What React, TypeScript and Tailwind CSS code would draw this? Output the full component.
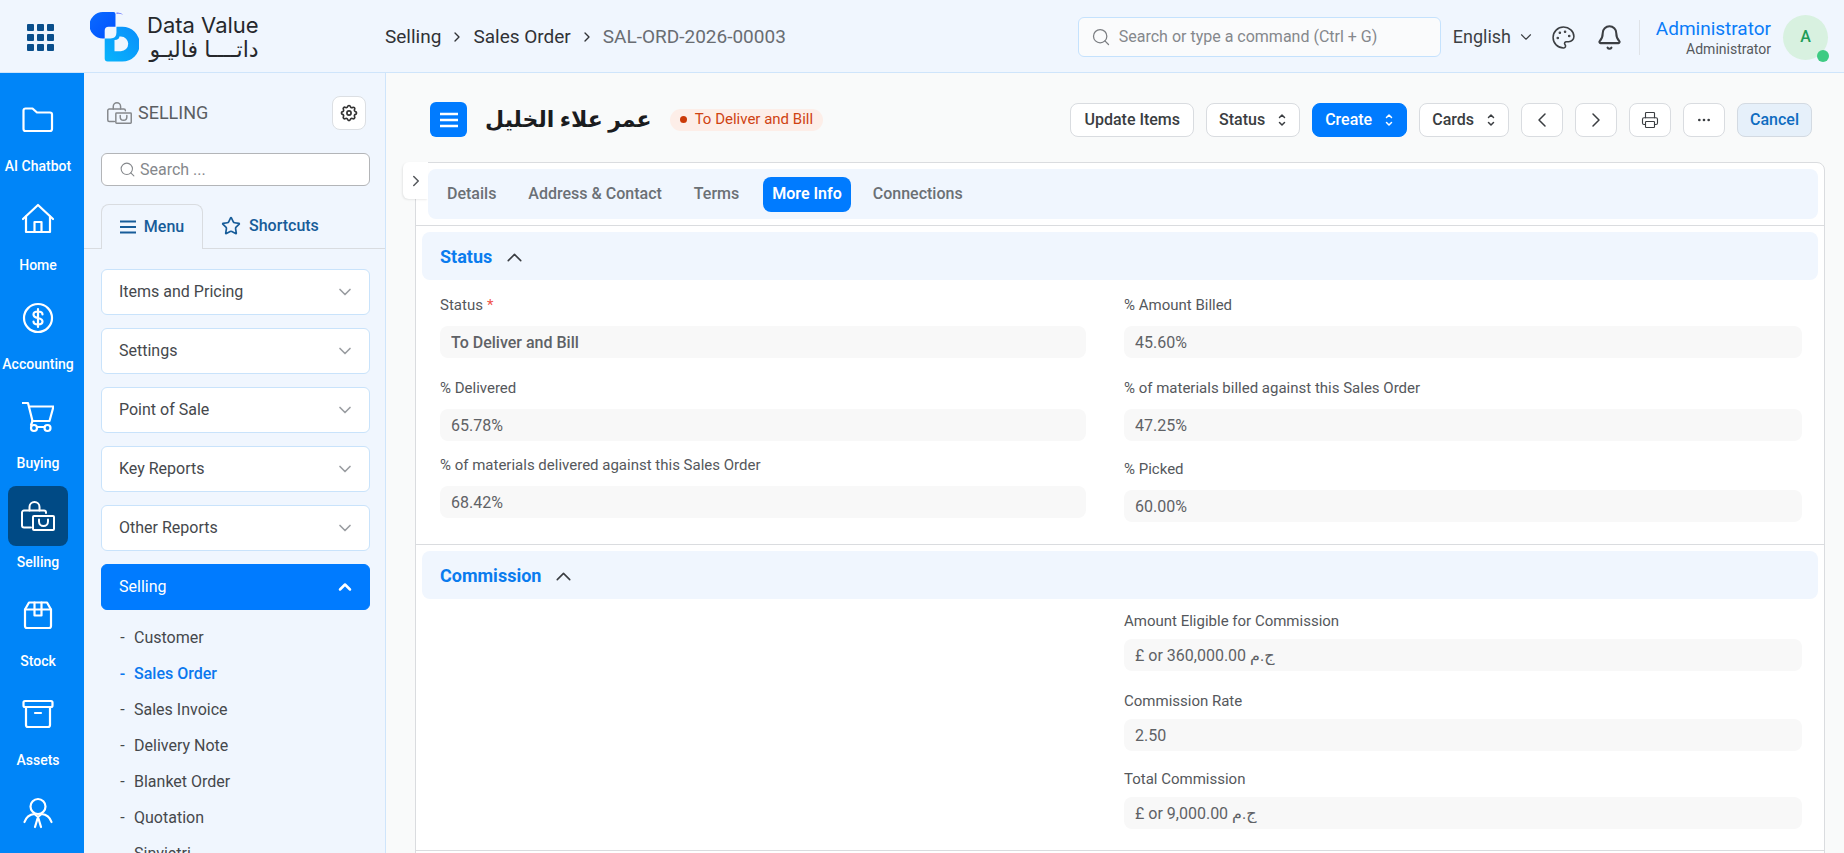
import type { ReactNode } from 'react'
import {
  Bell,
  ChevronDown,
  ChevronLeft,
  ChevronRight,
  ChevronUp,
  Ellipsis,
  Palette,
  Printer,
  Search,
  Star,
} from 'lucide-react'

type Field = {
  id: string
  label: string
  value: string
  required?: boolean
  strong?: boolean
  spacing?: string
}

const BagIcon = ({ className }: { className?: string }) => (
  <svg viewBox="0 0 34 30" fill="none" stroke="currentColor" strokeWidth="2" strokeLinejoin="round" strokeLinecap="round" className={className}>
    <path d="M10 26.500H3a2 2 0 0 1-2-2V11.500a2 2 0 0 1 2-2h20a2 2 0 0 1 2 2V12" />
    <path d="M8.500 9.500V6a5 5 0 0 1 10 0v3.500" />
    <rect x="12" y="15" width="21" height="14" rx="1" />
    <path d="M18 18.500v2a4.500 4.500 0 0 0 9 0v-2" />
  </svg>
)

const SortIcon = () => (
  <svg viewBox="0 0 10 14" fill="none" stroke="currentColor" strokeWidth="1.500" strokeLinejoin="round" strokeLinecap="round" className="h-[14px] w-[10px]">
    <path d="m2.500 4.500 2.500-2.500 2.500 2.500M2.500 9.500l2.500 2.500 2.500-2.500" />
  </svg>
)

const rail: { name: string; icon: ReactNode }[] = [
  {
    name: 'AI Chatbot',
    icon: (
      <path d="M3.500 4.500h7l4.500 4h13a2 2 0 0 1 2 2V25a2 2 0 0 1-2 2H3.500a2 2 0 0 1-2-2V6.500a2 2 0 0 1 2-2Z" />
    ),
  },
  {
    name: 'Home',
    icon: (
      <>
        <path d="M1 16 16 2l15 14" />
        <path d="M4 13.500V29h24V13.500" />
        <path d="M12.500 29V19h7v10" />
      </>
    ),
  },
  {
    name: 'Accounting',
    icon: (
      <>
        <circle cx="16" cy="16" r="14" />
        <path d="M20.500 12.500c0-2-2-3-4.500-3s-4.500 1-4.500 3c0 2.200 2 3 4.500 3.500s4.500 1.200 4.500 3.500c0 2-2 3-4.500 3s-4.500-1-4.500-3M16 7v18" />
      </>
    ),
  },
  {
    name: 'Buying',
    icon: (
      <>
        <path d="M.500 2H6l4.500 18h17L31.500 5.500H7" />
        <path d="M10.500 20 9 24" />
        <circle cx="12" cy="27" r="3" />
        <circle cx="25.500" cy="27" r="3" />
        <path d="M15 26h7.500" />
      </>
    ),
  },
  { name: 'Selling', icon: null },
  {
    name: 'Stock',
    icon: (
      <>
        <path d="M7 3.500h18l4 7V27a2 2 0 0 1-2 2H5a2 2 0 0 1-2-2V10.500Z" />
        <path d="M3 10.500h26M12.500 3.500V16.500h7V3.500" />
      </>
    ),
  },
  {
    name: 'Assets',
    icon: (
      <>
        <rect x="1.500" y="3" width="29" height="6" rx="1.500" />
        <path d="M4 9v18a2 2 0 0 0 2 2h20a2 2 0 0 0 2-2V9M13 15h6" />
      </>
    ),
  },
]

const groups = ['Items and Pricing', 'Settings', 'Point of Sale', 'Key Reports', 'Other Reports']

const links = ['Customer', 'Sales Order', 'Sales Invoice', 'Delivery Note', 'Blanket Order', 'Quotation', 'Sinvietri']

const tabs = ['Details', 'Address & Contact', 'Terms', 'More Info', 'Connections']

const statusLeft: Field[] = [
  { id: 'status', label: 'Status', value: 'To Deliver and Bill', required: true, strong: true },
  { id: 'delivered', label: '% Delivered', value: '65.78%', spacing: 'mt-[18px]' },
  { id: 'materials-delivered', label: '% of materials delivered against this Sales Order', value: '68.42%', spacing: 'mt-3' },
]

const statusRight: Field[] = [
  { id: 'billed', label: '% Amount Billed', value: '45.60%' },
  { id: 'materials-billed', label: '% of materials billed against this Sales Order', value: '47.25%', spacing: 'mt-[18px]' },
  { id: 'picked', label: '% Picked', value: '60.00%', spacing: 'mt-4' },
]

const commission: Field[] = [
  { id: 'eligible', label: 'Amount Eligible for Commission', value: '£ or 360,000.00 ج.م' },
  { id: 'rate', label: 'Commission Rate', value: '2.50', spacing: 'mt-[18px]' },
  { id: 'total', label: 'Total Commission', value: '£ or 9,000.00 ج.م', spacing: 'mt-4' },
]

function Logo() {
  return (
    <a href="#" className="flex items-center gap-2 text-[#26282c]">
      <svg viewBox="0 0 50 51" className="h-[50px] w-[49px]">
        <defs>
          <linearGradient id="logo-top" x1="0" y1="0" x2="1" y2="1">
            <stop offset="0" stopColor="#0a6bff" />
            <stop offset="1" stopColor="#0050ff" />
          </linearGradient>
          <linearGradient id="logo-bottom" x1="1" y1="0" x2="0" y2="1">
            <stop offset="0" stopColor="#0a8dfb" />
            <stop offset="1" stopColor="#08b4fb" />
          </linearGradient>
        </defs>
        <path d="M13 0h11q2 0 2 2v13h-7q-4 0-4 4v8h-2A13.500 13.500 0 0 1 13 0Z" fill="url(#logo-top)" />
        <path d="M27 .500q5-.500 7 2.500-3-1.500-7-1Z" fill="#7b86ff" />
        <path
          fillRule="evenodd"
          d="M27 15h6a17.500 17.500 0 0 1 0 35.500H18q-3 0-3-3V27h6q6 0 6-6ZM25 28.500V40h6.500a6.500 6.500 0 0 0 0-15H30q0 3.500-5 3.500Z"
          fill="url(#logo-bottom)"
        />
      </svg>
      <span className="flex flex-col font-['Inter','DejaVu_Sans',sans-serif]">
        <span className="text-[22px] leading-6">Data Value</span>
        <span dir="rtl" lang="ar" className="text-[22px] leading-6 whitespace-nowrap">
          داتــــا فاليـو
        </span>
      </span>
    </a>
  )
}

function TopBar() {
  return (
    <header className="flex h-[73px] shrink-0 items-center border-b border-[#cfe5fb] bg-[#f0f6fe] pt-[2px] pr-4 pl-[27px]">
      <button aria-label="Apps" className="grid grid-cols-3 gap-[3px]">
        {Array.from({ length: 9 }, (_, i) => (
          <span key={i} className="size-[7px] rounded-[1px] bg-[#0a4f8c]" />
        ))}
      </button>
      <div className="flex w-[331px] shrink-0 pl-9">
        <Logo />
      </div>
      <nav aria-label="Breadcrumb" className="flex items-center gap-2 text-[19px] text-[#303236]">
        <a href="#">Selling</a>
        <ChevronRight size={16} />
        <a href="#">Sales Order</a>
        <ChevronRight size={16} />
        <span className="text-[#696d72]">SAL-ORD-2026-00003</span>
      </nav>
      <label className="ml-auto flex h-10 w-[363px] items-center gap-2 rounded-md border border-[#c5e2fd] bg-[#fafbfc] px-3 text-[#7b7e82]">
        <Search size={20} strokeWidth={1.5} />
        <input
          type="search"
          aria-label="Search or type a command"
          placeholder="Search or type a command (Ctrl + G)"
          className="min-w-0 flex-1 bg-transparent text-base outline-none placeholder:text-[#85888c]"
        />
      </label>
      <div className="ml-3 flex items-center gap-1 text-[#3c3f43]">
        <select aria-label="Language" className="w-[60px] appearance-none bg-transparent text-lg">
          <option>English</option>
        </select>
        <ChevronDown size={18} strokeWidth={1.5} />
      </div>
      <button aria-label="Theme" className="ml-4 text-[#3c3f43]">
        <Palette size={25} strokeWidth={1.5} />
      </button>
      <button aria-label="Notifications" className="ml-5 text-[#3c3f43]">
        <Bell size={27} strokeWidth={1.8} />
      </button>
      <div className="ml-4 flex h-[35px] items-center border-l border-[#dfe3e8] pl-4 text-right">
        <div>
          <a href="#" className="block text-[19px] leading-6 text-[#0a7cf8]">Administrator</a>
          <span className="block text-sm leading-4 text-[#55585c]">Administrator</span>
        </div>
      </div>
      <div className="relative ml-3 grid size-[45px] place-items-center rounded-full bg-[#d8f1e0] text-base font-medium text-[#1f9d57]">
        A
        <span className="absolute -right-px -bottom-[2px] size-3 rounded-full bg-[#3ecb83]" />
      </div>
    </header>
  )
}

function Rail() {
  return (
    <nav className="flex w-[84px] shrink-0 flex-col items-center gap-3 overflow-hidden bg-[#0085f8] pt-[17px] pr-2">
      {rail.map((item) => (
        <a key={item.name} href="#" className="flex shrink-0 flex-col items-center gap-[5px] text-sm leading-[22px] font-medium text-white">
          {item.icon ? (
            <span className="grid size-[60px] place-items-center">
              <svg viewBox="0 0 32 32" fill="none" stroke="currentColor" strokeWidth="2.200" strokeLinejoin="round" strokeLinecap="round" className="size-8">
                {item.icon}
              </svg>
            </span>
          ) : (
            <span className="grid size-[60px] place-items-center rounded-lg bg-[#004a85]">
              <BagIcon className="h-[30px] w-[34px]" />
            </span>
          )}
          {item.name}
        </a>
      ))}
      <a href="#" aria-label="HR" className="grid size-[60px] shrink-0 place-items-center text-white">
        <svg viewBox="0 0 32 32" fill="none" stroke="currentColor" strokeWidth="2.200" strokeLinejoin="round" strokeLinecap="round" className="size-8">
          <circle cx="16" cy="9.500" r="7.500" />
          <path d="M2.500 25c1.500-4.500 5-7.500 10-8L16 20l3.500-3c5 .500 8.500 3.500 10 8M16 20l-3 10M16 20l3 10" />
        </svg>
      </a>
    </nav>
  )
}

function Sidebar() {
  return (
    <aside className="flex w-[302px] shrink-0 flex-col overflow-hidden border-r border-[#cfe5fb] bg-[#f0f6fe] text-base text-[#45484c]">
      <div className="flex items-center pt-[23px] pr-[19px] pl-[17px]">
        <BagIcon className="ml-[6px] h-[22px] w-[25px] text-[#85888c]" />
        <h2 className="ml-[6px] text-lg text-[#5b5e62]">SELLING</h2>
        <button aria-label="Sidebar settings" className="ml-auto grid size-[34px] place-items-center rounded-lg border border-[#dcdfe3] bg-white text-[#333]">
          <svg viewBox="0 0 24 24" fill="none" stroke="currentColor" strokeWidth="2" className="size-5">
            <path d="M10.300 4.300c.400-1.800 3-1.800 3.400 0a1.700 1.700 0 0 0 2.600 1.100c1.500-.900 3.300.800 2.400 2.400a1.700 1.700 0 0 0 1 2.500c1.800.400 1.800 3 0 3.400a1.700 1.700 0 0 0-1 2.600c.900 1.500-.900 3.300-2.400 2.400a1.700 1.700 0 0 0-2.600 1c-.400 1.800-3 1.800-3.400 0a1.700 1.700 0 0 0-2.600-1c-1.500.900-3.300-.900-2.400-2.400a1.700 1.700 0 0 0-1-2.600c-1.800-.400-1.800-3 0-3.400a1.700 1.700 0 0 0 1-2.600c-.900-1.500.900-3.300 2.400-2.400a1.700 1.700 0 0 0 2.600-1Z" />
            <circle cx="12" cy="12" r="2.500" />
          </svg>
        </button>
      </div>
      <label className="mt-[23px] mr-[15px] ml-[17px] flex h-[33px] shrink-0 items-center gap-1 rounded-md border border-[#b3b5b8] bg-white px-[17px] text-[#85888c]">
        <Search size={17} strokeWidth={1.5} />
        <input type="search" aria-label="Search menu" placeholder="Search ..." className="min-w-0 flex-1 bg-transparent outline-none placeholder:text-[#85888c]" />
      </label>
      <div className="mt-[18px] flex font-medium text-[#175c99]">
        <span className="w-[17px] border-b border-[#d9dce0]" />
        <button className="flex h-[45px] w-[102px] items-center justify-center gap-2 rounded-t-lg border border-b-0 border-[#d9dce0]">
          <svg viewBox="0 0 16 14" stroke="currentColor" strokeWidth="2" className="h-[14px] w-4">
            <path d="M0 1.500h16M0 7h16M0 12.500h16" />
          </svg>
          Menu
        </button>
        <button className="flex h-[45px] flex-1 items-center gap-2 border-b border-[#d9dce0] pl-[18px]">
          <Star size={20} />
          Shortcuts
        </button>
      </div>
      <div className="mt-5 flex flex-col gap-[13px] pr-[15px] pl-[17px]">
        {groups.map((name) => (
          <button key={name} className="flex h-[46px] items-center justify-between rounded-md border border-[#c9e3fb] bg-white pr-[14px] pl-[17px]">
            {name}
            <ChevronDown size={20} className="text-[#9a9da1]" />
          </button>
        ))}
        <button className="flex h-[46px] items-center justify-between rounded-md border border-[#007bff] bg-[#007bff] pr-[14px] pl-[17px] text-white">
          Selling
          <ChevronUp size={20} strokeWidth={3} />
        </button>
      </div>
      <ul className="mt-[10px] pl-[35px]">
        {links.map((name) => (
          <li key={name} className={name === 'Sales Order' ? 'font-medium text-[#0a78ee]' : ''}>
            <a href="#" className="flex h-9 items-center gap-2">
              <span className="w-[7px] text-center">-</span>
              {name}
            </a>
          </li>
        ))}
      </ul>
    </aside>
  )
}

function ToolButton({ children, label, className = 'w-[42px] border-[#d9dce0] bg-white' }: { children: ReactNode; label?: string; className?: string }) {
  return (
    <button aria-label={label} className={`flex h-[34px] items-center justify-center gap-3 rounded-lg border text-base ${className}`}>
      {children}
    </button>
  )
}

function TitleRow() {
  return (
    <div className="flex items-center pt-[29px] pr-8 pl-11">
      <button aria-label="Toggle sidebar" className="grid h-[35px] w-[37px] place-items-center rounded-md bg-[#007bff] text-white">
        <svg viewBox="0 0 18 16" stroke="currentColor" strokeWidth="2.400" className="h-4 w-[18px]">
          <path d="M0 2h18M0 8h18M0 14h18" />
        </svg>
      </button>
      <h1 dir="rtl" lang="ar" className="ml-[18px] text-[22px] leading-8 font-bold text-[#1b1c1e]">
        عمر علاء الخليل
      </h1>
      <span className="ml-[18px] flex h-[22px] items-center gap-2 rounded-full bg-[#fdeee8] px-[10px] text-[15px] text-[#cf4312]">
        <span className="size-[7px] rounded-full bg-[#cb3a08]" />
        To Deliver and Bill
      </span>
      <div className="ml-auto flex gap-3 font-medium text-[#3a3d41]">
        <ToolButton className="border-[#d9dce0] bg-white px-[13px]">Update Items</ToolButton>
        <ToolButton className="border-[#d9dce0] bg-white px-3">
          Status
          <SortIcon />
        </ToolButton>
        <ToolButton className="border-[#007bff] bg-[#007bff] px-3 text-white">
          Create
          <SortIcon />
        </ToolButton>
        <ToolButton className="border-[#d9dce0] bg-white px-3">
          Cards
          <SortIcon />
        </ToolButton>
        <ToolButton label="Previous">
          <ChevronLeft size={24} strokeWidth={1.5} />
        </ToolButton>
        <ToolButton label="Next">
          <ChevronRight size={24} strokeWidth={1.5} />
        </ToolButton>
        <ToolButton label="Print">
          <Printer size={18} strokeWidth={1.5} />
        </ToolButton>
        <ToolButton label="More">
          <Ellipsis size={16} />
        </ToolButton>
        <ToolButton className="border-[#d3dae2] bg-[#e6f0fa] px-3 text-[#0f6cc0]">Cancel</ToolButton>
      </div>
    </div>
  )
}

function FieldColumn({ fields, gap }: { fields: Field[]; gap: string }) {
  return (
    <div className="flex flex-col">
      {fields.map((f) => (
        <div key={f.id} className={`flex flex-col ${gap} ${f.spacing ?? ''}`}>
          <label htmlFor={f.id} className="text-[15px] leading-6 text-[#55585c]">
            {f.label}
            {f.required && <span className="ml-1 text-[#f0524a]">*</span>}
          </label>
          <input
            id={f.id}
            readOnly
            defaultValue={f.value}
            className={`h-8 w-full rounded-lg bg-[#f8f8f8] px-[11px] text-base text-[#5f6266] outline-none ${f.strong ? 'font-medium' : ''}`}
          />
        </div>
      ))}
    </div>
  )
}

function Section({ title, className, children }: { title: string; className: string; children: ReactNode }) {
  return (
    <section className="border-t border-[#dadcdf] pt-[6px]">
      <button className="mx-[6px] flex h-12 w-[calc(100%-12px)] items-center gap-[10px] rounded-lg bg-[#f0f6fe] px-[18px] pt-[2px] text-lg font-bold text-[#0a7cee]">
        {title}
        <ChevronUp size={25} strokeWidth={1.5} className="text-[#3a3d41]" />
      </button>
      <div className={`grid grid-cols-[646fr_678fr] gap-x-[38px] pr-[22px] pl-6 ${className}`}>{children}</div>
    </section>
  )
}

export default function App() {
  return (
    <div className="flex h-screen flex-col overflow-hidden font-['Roboto','Noto_Sans','DejaVu_Sans',sans-serif]">
      <TopBar />
      <div className="flex min-h-0 flex-1">
        <Rail />
        <Sidebar />
        <main className="min-w-0 flex-1 overflow-hidden bg-[#f9fafa]">
          <TitleRow />
          <div className="relative mt-[25px] mr-[19px] ml-[29px] rounded-t-lg border border-[#dadcdf] bg-white">
            <button aria-label="Expand" className="absolute -top-px -left-[13px] grid h-[37px] w-[25px] place-items-center rounded-l-md bg-white text-[#55585c] shadow-[-1px_1px_2px_rgba(0,0,0,0.08)]">
              <ChevronRight size={18} />
            </button>
            <nav className="mt-[6px] mr-[6px] mb-[6px] ml-3 flex h-[50px] items-center gap-3 rounded-lg bg-[#f0f6fe] px-[9px] font-medium text-[#6b7075]">
              {tabs.map((tab) => (
                <button
                  key={tab}
                  className={
                    tab === 'More Info'
                      ? 'ml-[2px] h-[35px] rounded-lg bg-[#007bff] px-[9px] font-semibold text-white'
                      : 'h-[35px] px-[10px]'
                  }
                >
                  {tab}
                </button>
              ))}
            </nav>
            <Section title="Status" className="pt-[13px] pb-[22px]">
              <FieldColumn fields={statusLeft} gap="gap-[9px]" />
              <FieldColumn fields={statusRight} gap="gap-[9px]" />
            </Section>
            <Section title="Commission" className="pt-[10px] pb-[21px]">
              <div />
              <FieldColumn fields={commission} gap="gap-[6px]" />
            </Section>
            <div className="h-10 border-t border-[#dadcdf]" />
          </div>
        </main>
      </div>
    </div>
  )
}
